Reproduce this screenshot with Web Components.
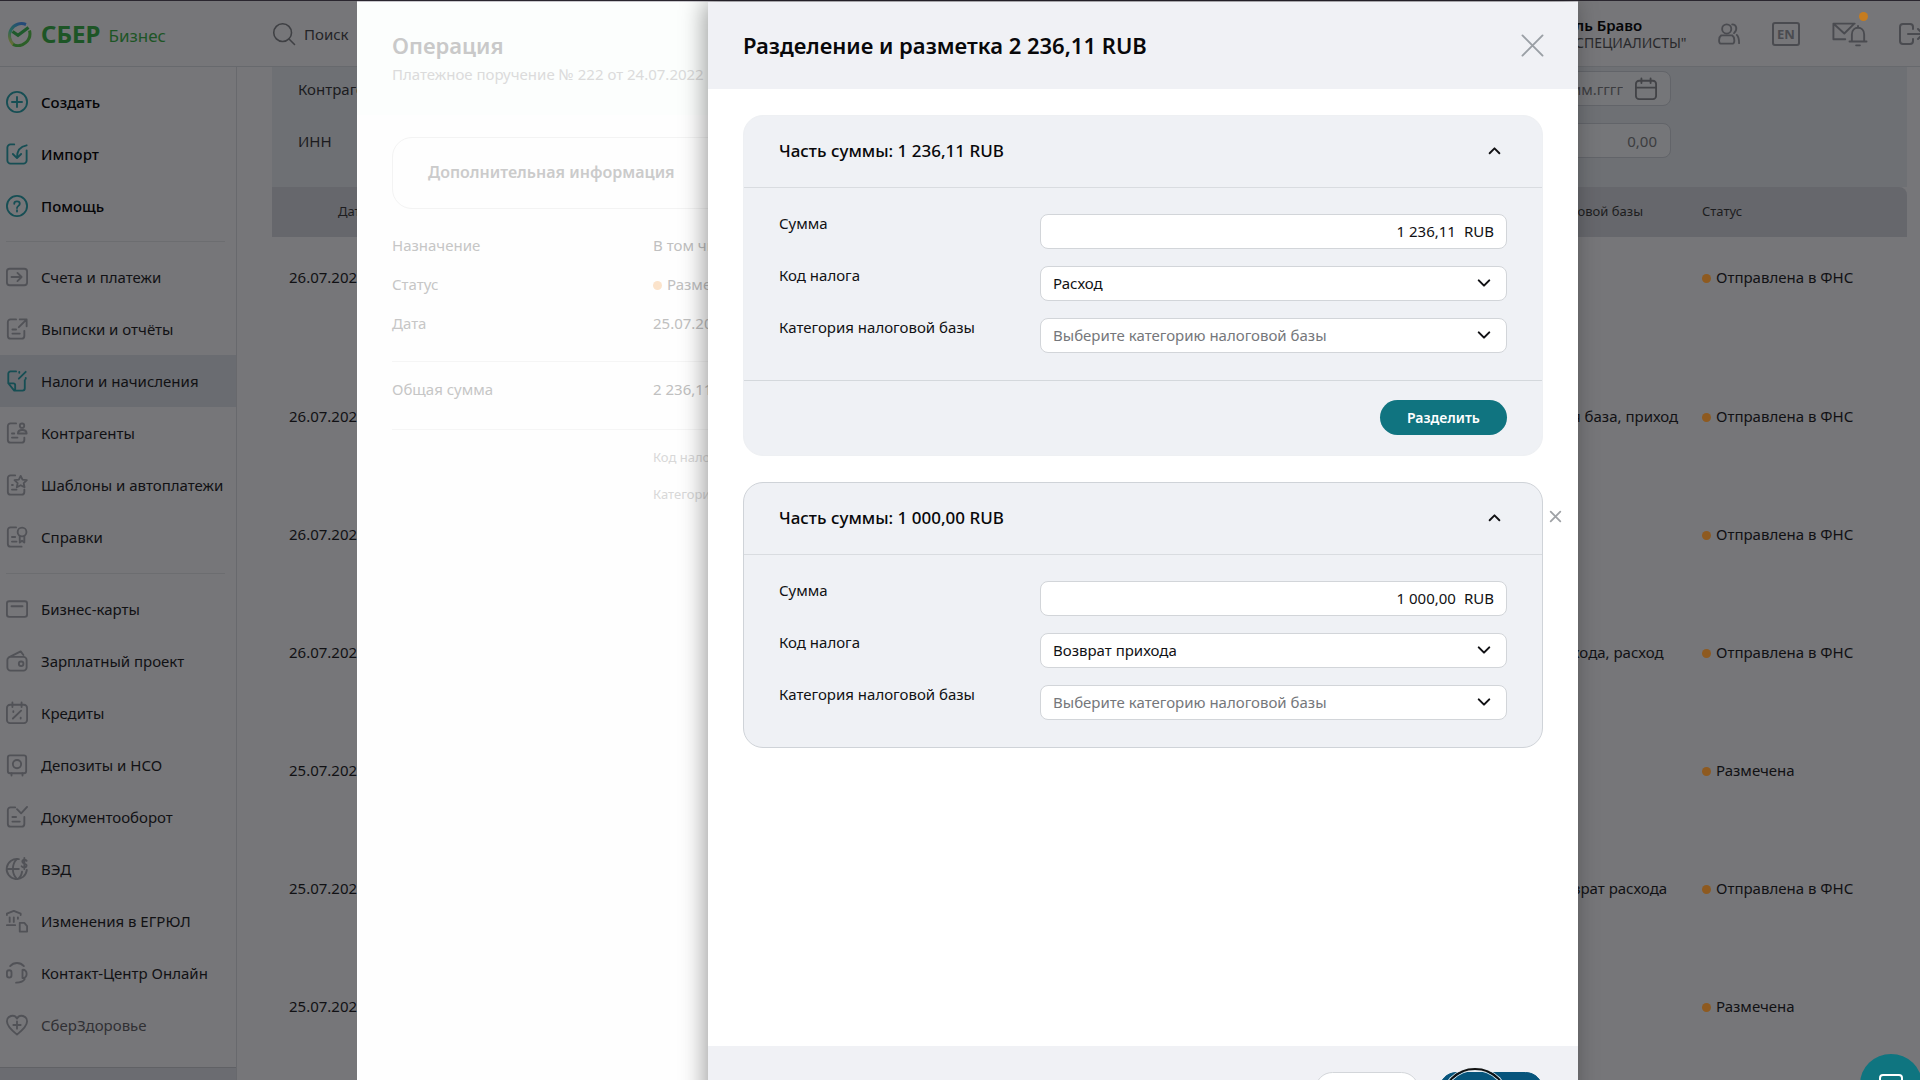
<!DOCTYPE html>
<html lang="ru">
<head>
<meta charset="utf-8">
<title>СБЕР Бизнес</title>
<style>
  :root {
    --page: #767679; --panel: #6e7074; --thead: #66676c; --line: #67686c;
    --ink: #111114; --ink-strong: #050507; --ink-muted: #303034; --icon: #515257; --teal-dim: #164e54;
    --orange-dim: #8e5a20; --surface: #f0f1f5; --rule: #d9dce0;
  }
  html, body { height: 100%; }
  body {
    margin: 0; overflow: hidden; background: var(--page); color: var(--ink);
    font: 15px/20px "Noto Sans", "Open Sans", "Liberation Sans", sans-serif;
  }
</style>
</head>
<body>
<bank-app></bank-app>
<script>
const ICONS = {
  plus: '<circle cx="12" cy="12" r="11"/><path d="M12 6.5v11M6.500 12h11"/>',
  import: '<path d="M9 1.500H5A3.500 3.500 0 0 0 1.500 5v14A3.500 3.500 0 0 0 5 22.500h14a3.500 3.500 0 0 0 3.500-3.500V8"/><path d="M22.500 2.500C16 3.500 12 7 12 16M7.500 12l4.500 4.500 4.500-4.500"/>',
  help: '<circle cx="12" cy="12" r="11"/><path d="M9 9.500C9 6 15 6 15 9.500c0 2.500-3 2.200-3 4.800M12 16.500v1.500"/>',
  pay: '<rect x="1" y="3" width="22" height="18" rx="3"/><path d="M6 12h11M12.500 7.500 17 12l-4.500 4.500"/>',
  report: '<path d="M11 1.500H5A3 3 0 0 0 2 4.500v15a3 3 0 0 0 3 3h12a3 3 0 0 0 3-3V14M7 12.500h4M7 17h8M15 1.500h7.500V9M22 2l-8 8"/>',
  tax: '<path d="M11 1.500H5A2.500 2.500 0 0 0 2.500 4v10.500L9 22.500h9a2.500 2.500 0 0 0 2.500-2.500v-9M2.500 14.500H8a2 2 0 0 1 2 2v6M21.500 2 14 9.500M14.500 2v1M21.500 8.500v1"/>',
  partner: '<path d="M11 1.500H5A3 3 0 0 0 2 4.500v15a3 3 0 0 0 3 3h12a3 3 0 0 0 3-3V17M6.500 12.500H9M6.500 17h6"/><circle cx="17.500" cy="4" r="2.400"/><path d="M13 12.500c0-5 9.500-5 9.500 0z"/>',
  star: '<path d="M10 1.500H5A3 3 0 0 0 2 4.500v15a3 3 0 0 0 3 3h12a3 3 0 0 0 3-3V17M6.500 12h1M6.500 17h5M16 2l2 4.200 4.700.5-3.400 3.200.9 4.600-4.200-2.300-4.200 2.300.9-4.600L9.300 6.700l4.700-.5z"/>',
  cert: '<path d="M11 1.500H5A3 3 0 0 0 2 4.500v15a3 3 0 0 0 3 3h12M6.500 12H10M6.500 17h5"/><circle cx="17.500" cy="6.500" r="4.800"/><path d="M15 11v7l2.500-2 2.500 2v-7"/>',
  card: '<rect x="1" y="3.500" width="22" height="17" rx="2.500"/><path d="M6 9h12"/>',
  wallet: '<path d="M3 8 16 1.500l3 4M5 7.500h14a3.500 3.500 0 0 1 3.500 3.500v8a3.500 3.500 0 0 1-3.500 3.500H5A3.500 3.500 0 0 1 1.500 19v-8A3.500 3.500 0 0 1 5 7.500z"/><circle cx="16.500" cy="15" r="2.500"/>',
  credit: '<rect x="1" y="3" width="22" height="20" rx="3.500"/><path d="M7 .5v5M17 .5v5M16.500 9.500l-9 8.500M8 10v1M16 17v1"/>',
  safe: '<rect x="2" y="1.500" width="20" height="19.500" rx="2.500"/><circle cx="12" cy="11" r="4.500"/><path d="M6 21v2.500M18 21v2.500"/>',
  doc: '<path d="M10 1.500H5A3 3 0 0 0 2 4.500v15a3 3 0 0 0 3 3h12a3 3 0 0 0 3-3V12M7 12h4M7 17h8M12 3.500l4.500 4.500 6.500-7"/>',
  globe: '<path d="M14 1.300A11 11 0 1 0 22.700 13M1 12h13M12 1c-6 6-6 16 0 22M13 23c3-2 4-5 4.500-8"/><path d="M22.500 3c-2-2-5.500-1-4.500 1.500s5 1.500 4.500 4-4 2.500-5.500.5M20 0v12"/>',
  gov: '<path d="M1 5.500V4l7.500-3L16 4v1.500M4 8v5M8.500 8v5M13 8v1.500M1 16.500h9M15 14h5l3 3.500v6h-8z"/>',
  headset: '<path d="M4.500 4.500c4-4.600 11-4.600 15 0"/><rect x="1" y="9" width="5" height="8" rx="2.500"/><path d="M18 8.500c6-.5 6 9.500 0 9zM20.500 18.500c-1.500 3-4.500 4-9.500 4"/>',
  heart: '<path d="M12 22.500C5 17 1 12.500 1 8c0-6 8-8.500 11-3 3-5.500 11-3 11 3 0 4.500-4 9-11 14.500zM12 8v8M8 12h8"/>',
  search: '<circle cx="10.500" cy="10.500" r="9.700"/><path d="M17.500 17.500l6 6"/>',
  users: '<circle cx="9.500" cy="6.500" r="5"/><path d="M3.500 13.500h12c3 2 3 9 .500 9h-13c-2.500 0-2.500-7 .500-9zM15.500 1.500c5 0 6 6 2 9.500M20.500 13c2 2 2.500 5 2.500 9"/>',
  calendar: '<rect x="1" y="3" width="22" height="20" rx="3.500"/><path d="M1 10.500h22M7 .5v5M17 .5v5"/>',
  close: '<path d="M1.500 1.500l21 21M22.500 1.500l-21 21"/>',
  up: '<path d="M3 17l9-9 9 9"/>',
  down: '<path d="M3 7.500l9 9 9-9"/>',
  mail: '<path d="M14 18H1.500V1.500H24M2 2l11 10L23 2"/><path d="M18.500 20.500h18M21 20.500V13c0-9.500 13-9.500 13 0v7.500M27.500 6V4M25.500 24.500h4"/>',
  exit: '<path d="M14 6V4a3 3 0 0 0-3-3H4a3 3 0 0 0-3 3v14a3 3 0 0 0 3 3h7a3 3 0 0 0 3-3v-2M9 11h15M19 6l5 5-5 5"/>',
  chat: '<rect x="1" y="1" width="22" height="20" rx="3"/><path d="M5.500 7h13"/>'
};

const define = (name, css, html) => {
  customElements.define(name, class extends HTMLElement {
    constructor() { super(); this.attachShadow({ mode: 'open' }); }
    connectedCallback() {
      const body = typeof html === 'function' ? html(this) : html;
      this.shadowRoot.innerHTML = `<style>*{box-sizing:border-box}${css}</style>${body}`;
    }
  });
};

define('ui-icon',
  `:host{display:block;flex:none;line-height:0}
   svg{fill:none;stroke:currentColor;stroke-linecap:round;stroke-linejoin:round;overflow:visible}`,
  el => {
    const w = el.getAttribute('w') || 22, h = el.getAttribute('h') || w;
    return `<svg width="${w}" height="${h}" viewBox="${el.getAttribute('box') || '0 0 24 24'}" stroke-width="${el.getAttribute('stroke') || 2}" aria-hidden="true">${ICONS[el.getAttribute('name')]}</svg>`;
  });

define('brand-logo',
  `:host{display:block}
   a{display:flex;align-items:center;color:#1d5526;text-decoration:none}
   b{font-size:24px;line-height:26px;margin-left:8px}
   span{font-size:17px;line-height:26px;margin:4px 0 0 8px}`,
  `<a href="#"><svg width="26" height="26" viewBox="2 0 26 26" fill="none" aria-hidden="true">
     <defs><linearGradient id="g" x1="0" y1="1" x2=".7" y2="0"><stop offset="0" stop-color="#77702a"/><stop offset=".5" stop-color="#25665c"/><stop offset="1" stop-color="#244a78"/></linearGradient></defs>
     <path d="M9 24A12 12 0 0 1 21 3.500" stroke="url(#g)" stroke-width="3"/>
     <path d="M24.500 9.500A12 12 0 0 1 8 23.500" stroke="#2c5f28" stroke-width="3"/>
     <path d="M7.500 10.500l5.500 3.800L23.500 6.500" stroke="#1f5a2c" stroke-width="3.200"/></svg>
     <b>СБЕР</b><span>Бизнес</span></a>`);

define('app-header',
  `:host{display:flex;align-items:center;height:66px;padding-left:7px;border-bottom:1px solid #67696d;overflow:hidden}
   brand-logo{width:266px}
   .search{display:flex;align-items:center;gap:9px;color:#3f4044}
   .search span{color:#242427}
   .right{margin-left:auto;display:flex;align-items:center;gap:32px;color:#4a4b50}
   .who{width:111px;white-space:nowrap;color:#29292c;font-size:14px;line-height:17px}
   .who b{display:block;font-size:15px;font-weight:600;color:var(--ink-strong)}
   button{all:unset;display:block;position:relative}
   .lang{width:28px;height:24px;border:2px solid;border-radius:3px;font-size:13px;line-height:20px;font-weight:700;text-align:center;box-sizing:border-box}
   .dot{position:absolute;right:-1px;top:-10px;width:9px;height:9px;border-radius:50%;background:#c67c1f}
   .exit{width:21px}`,
  `<brand-logo></brand-logo>
   <div class="search"><ui-icon name="search" stroke="1.700"></ui-icon><span>Поиск</span></div>
   <div class="right">
     <div class="who"><b>ль Браво</b>СПЕЦИАЛИСТЫ"</div>
     <button aria-label="Пользователи"><ui-icon name="users"></ui-icon></button>
     <button class="lang">EN</button>
     <button aria-label="Сообщения"><ui-icon name="mail" w="35" h="24" box="0 0 37 25"></ui-icon><i class="dot"></i></button>
     <button class="exit" aria-label="Выход"><ui-icon name="exit" w="24" h="22" box="0 0 24 22"></ui-icon></button>
   </div>`);

define('nav-item',
  `:host{display:block}
   a{display:flex;align-items:center;height:52px;padding:0 6px;gap:13px;color:var(--ink);text-decoration:none;white-space:nowrap}
   ui-icon{color:var(--icon)}
   :host([strong]) a{font-weight:500;color:var(--ink-strong)}
   :host([strong]) ui-icon,:host([active]) ui-icon{color:var(--teal-dim)}
   :host([active]) a{background:#6a6c71}
   :host([muted]) a{color:var(--ink-muted)}`,
  el => `<a href="#"><ui-icon name="${el.getAttribute('icon')}"></ui-icon><slot></slot></a>`);

define('side-nav',
  `:host{display:flex;flex-direction:column;border-right:1px solid #68696d}
   nav{padding-top:9px;flex:none}
   hr{border:0;height:1px;background:#6c6d70;margin:9px 11px 9px 6px}
   hr + nav-item ~ hr{margin-top:10px}
   .foot{margin-top:16px;border-top:1px solid #606165;background:#6b6c71;flex:1}`,
  `<nav>
    <nav-item strong icon="plus">Создать</nav-item>
    <nav-item strong icon="import">Импорт</nav-item>
    <nav-item strong icon="help">Помощь</nav-item>
    <hr>
    <nav-item icon="pay">Счета и платежи</nav-item>
    <nav-item icon="report">Выписки и отчёты</nav-item>
    <nav-item active icon="tax">Налоги и начисления</nav-item>
    <nav-item icon="partner">Контрагенты</nav-item>
    <nav-item icon="star">Шаблоны и автоплатежи</nav-item>
    <nav-item icon="cert">Справки</nav-item>
    <hr>
    <nav-item icon="card">Бизнес-карты</nav-item>
    <nav-item icon="wallet">Зарплатный проект</nav-item>
    <nav-item icon="credit">Кредиты</nav-item>
    <nav-item icon="safe">Депозиты и НСО</nav-item>
    <nav-item icon="doc">Документооборот</nav-item>
    <nav-item icon="globe">ВЭД</nav-item>
    <nav-item icon="gov">Изменения в ЕГРЮЛ</nav-item>
    <nav-item icon="headset">Контакт-Центр Онлайн</nav-item>
    <nav-item muted icon="heart">СберЗдоровье</nav-item>
   </nav><div class="foot"></div>`);

define('filter-panel',
  `:host{display:flex;flex-direction:column;gap:17px;height:120px;padding:4px 236px 0 26px;background:var(--panel);flex:none}
   .row{display:flex;justify-content:space-between;align-items:center;height:35px}
   label{color:#1b1b1e}
   .box{display:flex;align-items:center;width:240px;height:35px;padding-right:13px;gap:12px;border:1px solid #626469;border-radius:8px;background:#757679;color:#424347}
   input{all:unset;flex:1;min-width:0;text-align:right;color:#3c3d40}
   input::placeholder{color:#3c3d40;opacity:1}`,
  `<div class="row"><label for="d">Контрагент</label><div class="box"><input id="d" placeholder="мм.гггг"><ui-icon name="calendar"></ui-icon></div></div>
   <div class="row"><label for="n">ИНН</label><div class="box"><input id="n" placeholder="0,00"></div></div>`);

const OPS = [
  ['26.07.2022', '', 'Отправлена в ФНС'],
  ['26.07.2022', 'я база, приход', 'Отправлена в ФНС'],
  ['26.07.2022', '', 'Отправлена в ФНС'],
  ['26.07.2022', 'хода, расход', 'Отправлена в ФНС'],
  ['25.07.2022', '', 'Размечена'],
  ['25.07.2022', 'врат расхода', 'Отправлена в ФНС'],
  ['25.07.2022', '', 'Размечена']
];
define('ops-table',
  `:host{display:block}
   table{width:100%;table-layout:fixed;border-collapse:collapse}
   th{height:50px;padding:0 0 2px;background:var(--thead);font-size:13px;font-weight:400;text-align:left;color:#1d1d20;white-space:nowrap}
   th:first-child{padding-left:66px}
   th:last-child{border-radius:0 8px 0 0}
   td{height:118px;padding:30px 0 0;vertical-align:top;white-space:nowrap}
   tr:first-child td{height:139px}
   td:first-child{padding-left:17px}
   .date{width:120px}.base{width:130px}.status{width:205px}
   i{display:inline-block;width:9px;height:9px;border-radius:50%;background:var(--orange-dim);margin-right:5px}`,
  `<table><colgroup><col class="date"><col><col class="base"><col class="status"></colgroup>
   <thead><tr><th>Дата</th><th></th><th>говой базы</th><th>Статус</th></tr></thead>
   <tbody>${OPS.map(r => `<tr><td>${r[0]}</td><td></td><td>${r[1]}</td><td><i></i>${r[2]}</td></tr>`).join('')}</tbody></table>`);

define('operation-panel',
  `:host{display:block;background:#fefefe;color:#c6c6c6;box-shadow:inset 1px 0 #fff}
   header{height:113px;padding:27px 35px 0;background:#fcfefd;white-space:nowrap}
   h2{margin:0;font-size:22px;line-height:32px;font-weight:600;color:#c9c9c9}
   p{margin:3px 0 0;color:#dbdbdb}
   main{padding:22px 35px}
   .info{height:72px;border:1px solid #f3f3f3;border-radius:20px;padding:0 35px 2px;display:flex;align-items:center;font-size:16px;font-weight:600;color:#cbcbcb;margin-bottom:26px}
   dl{margin:0;display:grid;grid-template-columns:261px 1fr;row-gap:19px;white-space:nowrap}
   dd{margin:0;color:#c0c0c0}
   hr{border:0;height:1px;background:#f5f5f5;margin:28px 0 17px}
   hr.b{margin-top:30px}
   .small{font-size:13px;row-gap:17px}
   .small dd{color:#d8d8d8}
   i{display:inline-block;width:9px;height:9px;border-radius:50%;background:#fbe3cb;margin-right:5px}`,
  `<header><h2>Операция</h2><p>Платежное поручение № 222 от 24.07.2022</p></header>
   <main><div class="info">Дополнительная информация</div>
   <dl><dt>Назначение</dt><dd>В том чи</dd><dt>Статус</dt><dd><i></i>Размечена</dd><dt>Дата</dt><dd>25.07.2022</dd></dl>
   <hr><dl><dt>Общая сумма</dt><dd>2 236,11</dd></dl>
   <hr class="b"><dl class="small"><dt></dt><dd>Код налога</dd><dt></dt><dd>Категория</dd></dl></main>`);

define('split-card',
  `:host{display:block;position:relative;border:1px solid #eef0f3;border-radius:20px;background:#eff1f5;color:var(--ink)}
   :host([outlined]){border-color:#cfd3d8}
   header{display:flex;align-items:center;justify-content:space-between;height:72px;padding:0 41px 2px 35px;border-bottom:1px solid var(--rule)}
   h3{margin:0;font-size:17px;line-height:24px;font-weight:500;color:#08080a}
   button{all:unset;display:block}
   form{display:grid;grid-template-columns:261px 1fr;row-gap:17px;padding:26px 35px 27px}
   label{line-height:19px}
   .field{position:relative;display:flex;align-items:center;height:35px;border:1px solid #d2d5d9;border-radius:8px;background:#fff;padding:0 12px 1px;gap:8px}
   input{all:unset;flex:1;min-width:0;text-align:right}
   select{all:unset;flex:1;min-width:0}
   select.empty{color:#75777b}
   .field ui-icon{position:absolute;right:15px;pointer-events:none}
   footer{display:flex;justify-content:flex-end;border-top:1px solid #d4d8dc;padding:19px 35px 20px}
   .go{width:127px;height:35px;border-radius:18px;background:#107480;color:#fff;font-size:14px;font-weight:600;text-align:center;line-height:35px}
   .remove{position:absolute;left:calc(100% + 8px);top:28px;color:#9fa2a6}`,
  el => {
    const a = n => el.getAttribute(n), more = el.hasAttribute('outlined');
    return `<header><h3>Часть суммы: ${a('sum')} RUB</h3><button aria-label="Свернуть"><ui-icon name="up" w="13" stroke="3.500"></ui-icon></button></header>
     <form>
      <label for="s">Сумма</label><div class="field"><input id="s" value="${a('sum')}"><span>RUB</span></div>
      <label for="c">Код налога</label><div class="field"><select id="c"><option>${a('code')}</option></select><ui-icon name="down" w="14" stroke="3.500"></ui-icon></div>
      <label for="k">Категория налоговой базы</label><div class="field"><select id="k" class="empty"><option>Выберите категорию налоговой базы</option></select><ui-icon name="down" w="14" stroke="3.500"></ui-icon></div>
     </form>` + (more
      ? '<button class="remove" aria-label="Удалить"><ui-icon name="close" w="11" stroke="4"></ui-icon></button>'
      : '<footer><button class="go">Разделить</button></footer>');
  });

define('split-panel',
  `:host{display:flex;flex-direction:column;background:#fff;box-shadow:-4px 0 22px rgba(0,0,0,.36)}
   header{display:flex;align-items:center;justify-content:space-between;height:87px;padding:0 34px 1px 35px;background:var(--surface);flex:none}
   h2{margin:0;font-size:22px;line-height:32px;font-weight:600;color:#08080a}
   button{all:unset;display:block}
   .x{color:#9a9fa5}
   main{flex:1;display:flex;flex-direction:column;gap:26px;padding:26px 35px 0}
   footer{position:relative;display:flex;justify-content:flex-end;gap:20px;height:84px;padding:26px 35px 0;background:var(--surface);flex:none}
   footer button{width:104px;height:35px;border-radius:18px;background:#fff;border:1px solid #d3d6da;box-sizing:border-box}
   footer .ok{background:#07557c;border-color:#07557c}
   .ring{position:absolute;right:69px;top:22px;width:68px;height:68px;border-radius:50%;border:2px solid #111;box-shadow:0 0 0 1px #e8eef2,inset 0 0 0 1px #dfe9ef}`,
  `<header><h2>Разделение и разметка 2 236,11 RUB</h2><button class="x" aria-label="Закрыть"><ui-icon name="close" w="23" stroke="2"></ui-icon></button></header>
   <main><split-card sum="1 236,11" code="Расход"></split-card>
   <split-card outlined sum="1 000,00" code="Возврат прихода"></split-card></main>
   <footer><button aria-label="Отменить"></button><button class="ok" aria-label="Сохранить"></button><div class="ring"></div></footer>`);

define('chat-button',
  `:host{display:block;position:fixed;right:-2px;bottom:-34px}
   button{all:unset;box-sizing:border-box;display:flex;justify-content:center;width:62px;height:60px;padding-top:20px;border-radius:50%;background:#0f7580;color:#fff}`,
  `<button aria-label="Чат"><ui-icon name="chat" w="24" stroke="2"></ui-icon></button>`);

define('bank-app',
  `:host{display:flex;flex-direction:column;height:100vh;overflow:hidden;border-top:1px solid #2a262f}
   .shell{flex:1;display:flex;min-height:0}
   side-nav{width:237px;flex:none}
   .content{flex:1;min-width:0;padding:0 13px 0 35px;overflow:hidden}
   .layer{position:fixed;inset:1px 342px -50px 357px;display:grid;grid-template-columns:351px 1fr;border-top:1px solid #c9c8cd}
   operation-panel{grid-area:1/1/2/3}
   split-panel{grid-area:1/2/2/3}`,
  `<app-header></app-header>
   <div class="shell"><side-nav></side-nav><div class="content"><filter-panel></filter-panel><ops-table></ops-table></div></div>
   <div class="layer"><operation-panel></operation-panel><split-panel></split-panel></div>
   <chat-button></chat-button>`);
</script>
</body>
</html>
